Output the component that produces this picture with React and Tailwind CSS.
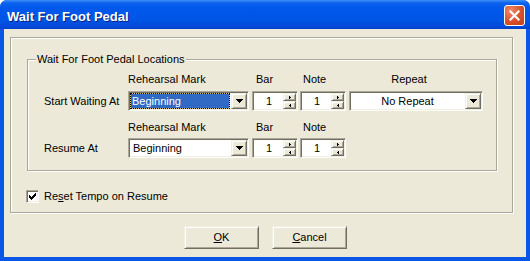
import React from 'react';

const sunken =
  'border border-t-[#aca899] border-l-[#aca899] border-b-white border-r-white shadow-[inset_1px_1px_0_#716f64,inset_-1px_-1px_0_#f1efe2] p-[1px] bg-white';
const raised =
  'border border-t-[#f1efe2] border-l-[#f1efe2] border-b-[#716f64] border-r-[#716f64] shadow-[inset_1px_1px_0_#ffffff,inset_-1px_-1px_0_#aca899] bg-[#ece9d8]';
const etched = 'border border-[#aca899] shadow-[inset_1px_1px_0_#ffffff,1px_1px_0_#ffffff]';

function DropButton() {
  return (
    <div className={`flex w-[16px] shrink-0 items-center justify-center ${raised}`}>
      <svg width="7" height="4" viewBox="0 0 7 4">
        <path d="M0 0h7v1H0zM1 1h5v1H1zM2 2h3v1H2zM3 3h1v1H3z" fill="#000" />
      </svg>
    </div>
  );
}

function Combo({ width, children }) {
  return (
    <div className={`flex h-[20px] shrink-0 ${width} ${sunken}`}>
      <div className="flex-1 pr-[1px]">{children}</div>
      <DropButton />
    </div>
  );
}

function Spin() {
  return (
    <div className={`flex h-[20px] w-[46px] shrink-0 ${sunken}`}>
      <div className="flex-1 pl-[1px] text-center leading-[16px]">1</div>
      <div className="flex w-[13px] flex-col">
        <div className={`flex flex-1 items-center justify-center ${raised}`}>
          <svg width="2" height="3" viewBox="0 0 2 3">
            <path d="M0 0h1v3H0zM1 1h1v1H1z" fill="#000" />
          </svg>
        </div>
        <div className={`flex flex-1 items-center justify-center ${raised}`}>
          <svg width="2" height="3" viewBox="0 0 2 3">
            <path d="M1 0h1v3H1zM0 1h1v1H0z" fill="#000" />
          </svg>
        </div>
      </div>
    </div>
  );
}

function Button({ children }) {
  return (
    <div className={`flex h-[23px] w-[75px] items-center justify-center ${raised}`}>
      {children}
    </div>
  );
}

export default function App() {
  return (
    <div className="h-[261px] w-[530px] bg-white font-['Liberation_Sans',Arial,sans-serif] text-[11px] text-black">
      <div className="flex h-full flex-col overflow-hidden rounded-t-[7px] bg-[#0a56e6]">
        {/* title bar */}
        <div className="flex h-[29px] shrink-0 items-start justify-between bg-[linear-gradient(to_bottom,#3d8ff7_0px,#0d62ee_3px,#0058ec_8px,#0055e5_20px,#0048d8_27px,#0040c8_29px)] pl-[7px] pr-[5px]">
          <span className="mt-[9px] text-[13px] font-bold leading-[15px] text-white [text-shadow:1px_1px_0_#0a1d80]">
            Wait For Foot Pedal
          </span>
          <div className="mt-[5px] flex h-[21px] w-[21px] items-center justify-center rounded-[3px] border border-white bg-[radial-gradient(circle_at_30%_25%,#f08a68,#d9502b_55%,#c13d1a)]">
            <svg width="11" height="11" viewBox="0 0 11 11">
              <path d="M1.5 1.5l8 8M9.5 1.5l-8 8" stroke="#fff" strokeWidth="2.2" strokeLinecap="square" />
            </svg>
          </div>
        </div>

        {/* body */}
        <div className="mx-[4px] mb-[4px] flex-1 bg-[#ece9d8] pl-[6px] pt-[8px]">
          <div className={`flex h-[176px] w-[503px] flex-col ${etched}`}>
            {/* group box */}
            <div className={`relative ml-[16px] mt-[21px] h-[112px] w-[470px] pl-[16px] pt-[13px] ${etched}`}>
              <span className="absolute left-[8px] top-[-7px] bg-[#ece9d8] px-[1px] leading-[13px]">
                Wait For Foot Pedal Locations
              </span>

              <div className="flex h-[13px] leading-[13px]">
                <div className="w-[84px]" />
                <div className="w-[124px]">Rehearsal Mark</div>
                <div className="w-[48px] pl-[4px]">Bar</div>
                <div className="w-[49px] pl-[3px]">Note</div>
                <div className="w-[134px] pr-[14px] text-center">Repeat</div>
              </div>
              <div className="mt-[5px] flex items-center">
                <div className="w-[84px] leading-[13px]">Start Waiting At</div>
                <Combo width="w-[121px]">
                  <div className="h-full bg-[#d8c070]">
                    <div className="h-full border border-dotted border-black bg-[#316ac5] bg-clip-padding pl-[1px] leading-[14px] text-white">
                      Beginning
                    </div>
                  </div>
                </Combo>
                <div className="w-[3px]" />
                <Spin />
                <div className="w-[2px]" />
                <Spin />
                <div className="w-[3px]" />
                <Combo width="w-[134px]">
                  <div className="text-center leading-[16px]">No Repeat</div>
                </Combo>
              </div>

              <div className="mt-[10px] flex h-[13px] leading-[13px]">
                <div className="w-[84px]" />
                <div className="w-[124px]">Rehearsal Mark</div>
                <div className="w-[48px] pl-[4px]">Bar</div>
                <div className="w-[49px] pl-[3px]">Note</div>
              </div>
              <div className="mt-[4px] flex items-center">
                <div className="w-[84px] leading-[13px]">Resume At</div>
                <Combo width="w-[121px]">
                  <div className="pl-[3px] leading-[16px]">Beginning</div>
                </Combo>
                <div className="w-[3px]" />
                <Spin />
                <div className="w-[2px]" />
                <Spin />
              </div>
            </div>

            {/* checkbox */}
            <div className="ml-[15px] mt-[19px] flex items-center gap-[5px]">
              <div className={`flex h-[13px] w-[13px] items-center justify-center ${sunken}`}>
                <svg width="7" height="7" viewBox="0 0 7 7">
                  <path
                    d="M6 0h1v1H6zM5 1h2v1H5zM0 2h1v1H0zM4 2h3v1H4zM0 3h2v1H0zM3 3h3v1H3zM0 4h5v1H0zM1 5h3v1H1zM2 6h1v1H2z"
                    fill="#000"
                  />
                </svg>
              </div>
              <span className="leading-[13px]">
                Re<span className="underline">s</span>et Tempo on Resume
              </span>
            </div>
          </div>

          {/* buttons */}
          <div className="ml-[174px] mt-[13px] flex gap-[13px]">
            <Button>
              <span>
                <span className="underline">O</span>K
              </span>
            </Button>
            <Button>
              <span>
                <span className="underline">C</span>ancel
              </span>
            </Button>
          </div>
        </div>
      </div>
    </div>
  );
}
